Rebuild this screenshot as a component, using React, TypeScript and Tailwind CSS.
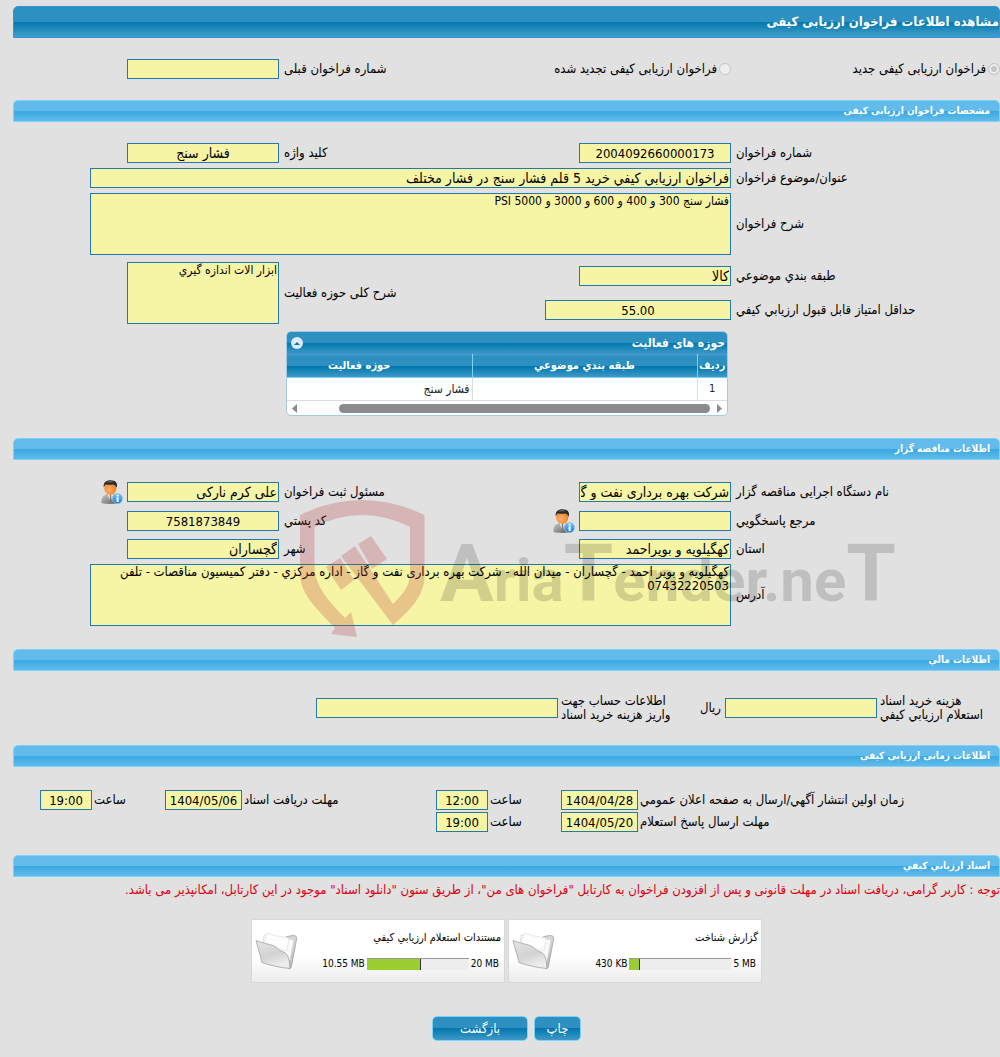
import type { ReactNode } from "react";

const fieldClass =
  "block h-5 shrink-0 border border-[#2578a9] bg-[#f6f4a5] px-px leading-[18px] text-black outline-none";
const areaClass =
  "block h-[62px] resize-none border border-[#2578a9] bg-[#f6f4a5] px-px leading-[14px] text-black outline-none";

const UserIcon = () => (
  <svg viewBox="0 0 22 24" className="h-6 w-[22px]" aria-hidden="true">
    <defs>
      <linearGradient id="suit" x1="0" y1="0" x2="1" y2="1">
        <stop offset="0" stopColor="#c9c9c9" />
        <stop offset="1" stopColor="#5d5d5d" />
      </linearGradient>
      <radialGradient id="face" cx="0.4" cy="0.6" r="0.7">
        <stop offset="0" stopColor="#ffb168" />
        <stop offset="1" stopColor="#e9791f" />
      </radialGradient>
      <linearGradient id="info" x1="0" y1="0" x2="0" y2="1">
        <stop offset="0" stopColor="#7fc4ef" />
        <stop offset="1" stopColor="#1b7fd4" />
      </linearGradient>
    </defs>
    <path d="M0.5 23 C0 17.500 2.500 15 6.500 14 L13 14 C16 15 18 18 17.500 23 C12 24.200 5 24.200 0.500 23Z" fill="url(#suit)" />
    <path d="M6.500 13.500 L9.500 22.500 L12.500 13.500Z" fill="#f7f7f7" />
    <path d="M8.800 15 L10.200 15 L10.600 21 L9.500 23 L8.600 21Z" fill="#777" />
    <ellipse cx="9.300" cy="8.500" rx="6" ry="6.400" fill="url(#face)" />
    <path d="M2.800 7.500 C2 2.500 5 0.300 9.500 0.300 C14.500 0.300 17 3 15.800 7.800 C14.500 6 14 5 12.500 4.600 C9 5.200 6 4.600 4.500 4.600 C3.800 5.500 3.300 6.500 2.800 7.500Z" fill="#2a2a2a" />
    <path d="M5 2.500 C7 0.900 11 0.900 13 2.400 C10.500 2 7.500 2.200 5 2.500Z" fill="#777" />
    <circle cx="16.500" cy="18.500" r="5.200" fill="url(#info)" stroke="#a4d3f3" strokeWidth="0.600" />
    <rect x="15.600" y="17.300" width="2" height="4.700" fill="#fff" />
    <rect x="15.600" y="14.800" width="2" height="1.700" fill="#fff" />
  </svg>
);

const FolderIcon = () => (
  <svg viewBox="0 0 44 40" className="h-10 w-11" aria-hidden="true">
    <defs>
      <linearGradient id="folderFront" x1="0" y1="0" x2="0.400" y2="1">
        <stop offset="0" stopColor="#e6e6e6" />
        <stop offset="0.600" stopColor="#d2d2d2" />
        <stop offset="1" stopColor="#ededed" />
      </linearGradient>
      <linearGradient id="folderBack" x1="0" y1="0" x2="0" y2="1">
        <stop offset="0" stopColor="#d8d8d8" />
        <stop offset="1" stopColor="#b5b5b5" />
      </linearGradient>
    </defs>
    <path d="M28 8 L32 5.500 L38 4.500 C41 4.500 42 5.500 41.600 8 L36.500 35 C36 37.500 35 38 33.500 37.500 L27 20Z" fill="url(#folderBack)" stroke="#a2a2a2" strokeWidth="0.800" />
    <path d="M9 4 L31 7 L39 9 L35 30 L8 14Z" fill="#f9f9f9" stroke="#d0d0d0" strokeWidth="0.600" />
    <path d="M12 2 L20 4.500 L34 7 L32 20 L9 13Z" fill="#fdfdfd" stroke="#dadada" strokeWidth="0.600" />
    <path d="M1 9.500 C8 12 13 13 18 14.500 C22 16 23 19 27 20.500 C32 22 34 24 35 37.500 C25 36.500 15 34.500 7 31.500 C5.500 25 3 17 1 9.500Z" fill="url(#folderFront)" stroke="#aaaaaa" strokeWidth="0.900" />
  </svg>
);

const Watermark = () => (
  <div dir="ltr" className="pointer-events-none absolute top-[499px] left-[300px] flex" aria-hidden="true">
    <svg viewBox="300 499 126 139" className="h-[139px] w-[126px]" fill="rgba(185,50,60,0.25)">
      <path d="M300 515 Q362 485 424.500 515 V577 C424 597 408 612 393 625 L341 556 L355 546 L393 604 C403 594 410 586 410 573 V527 Q362 503 314.500 527 V570 C316 587 330 603 345 618 L351 612 L357 637 L331 634 L335 628 C316 608 300 594 300 573Z" />
      <path d="M326 567 L340 558 L354 580 L341 590Z" />
      <path d="M358 544 L371 536 L387 559 L372 569Z" />
    </svg>
    <span className="mt-7 ml-[14px] font-[Roboto,sans-serif] text-[60px] leading-[94px] font-bold whitespace-nowrap text-black/15">
      <span className="text-[80px]">A</span>ria<span className="text-[80px]">T</span>ender.ne<span className="text-[80px]">T</span>
    </span>
  </div>
);

const SectionTitle = ({ children }: { children: ReactNode }) => (
  <h2 className="h-[22px] rounded-t-[5px] border border-[#78d3f8] bg-[linear-gradient(#62bbea_0,#62bbea_50%,#38a8e1_50%,#62bbea_100%)] px-[9px] text-[10px] leading-5 font-bold text-white">
    {children}
  </h2>
);

// First label of a row, its text sits against the field
const StartLabel = ({ id, children }: { id: string; children: ReactNode }) => (
  <label htmlFor={id} className="w-[269px] shrink-0 pl-[5px] text-left">
    {children}
  </label>
);

const MidLabel = ({ id, children }: { id: string; children: ReactNode }) => (
  <label htmlFor={id} className="flex-1 pl-[5px] text-left">
    {children}
  </label>
);

const documents = [
  { title: "گزارش شناخت", used: "430 KB", total: "5 MB", percent: 10 },
  { title: "مستندات استعلام ارزيابي کيفي", used: "10.55 MB", total: "20 MB", percent: 53 },
];

const App = () => {
  return (
    <main
      dir="rtl"
      lang="fa"
      className="relative min-h-screen overflow-x-clip bg-[#e1e1e1] pt-[6px] pb-4 pl-[13px] font-['DejaVu_Sans_Condensed','DejaVu_Sans',sans-serif] text-[13px] leading-[14px] text-black"
    >
      <h1 className="h-8 rounded-t-[5px] border border-[#2f94de] bg-[linear-gradient(#2e90c0_0,#2e90c0_50%,#0078ae_50%,#459fc9_100%)] leading-[30px] font-bold text-white">
        مشاهده اطلاعات فراخوان ارزیابی کیفی
      </h1>

      {/* Call type */}
      <div className="mt-[21px] flex items-center">
        <label className="flex w-[269px] items-center gap-[2px]">
          <input type="radio" name="kind" disabled defaultChecked className="size-3 appearance-none rounded-full border border-[#c6c6c6] bg-[#c4c4c4] shadow-[inset_0_0_0_2px_#eee]" />
          فراخوان ارزیابی کیفی جدید
        </label>
        <label className="flex items-center gap-[2px]">
          <input type="radio" name="kind" disabled className="size-3 appearance-none rounded-full border border-[#c6c6c6] bg-[#eee]" />
          فراخوان ارزیابی کیفی تجدید شده
        </label>
        <MidLabel id="prev">شماره فراخوان قبلی</MidLabel>
        <input id="prev" readOnly className={`${fieldClass} ml-[114px] w-[152px]`} />
      </div>

      {/* Call details */}
      <section className="mt-[21px]">
        <SectionTitle>مشخصات فراخوان ارزیابی کیفی</SectionTitle>
        <div className="mt-[21px] flex flex-col gap-[5px]">
          <div className="flex items-center">
            <StartLabel id="number">شماره فراخوان</StartLabel>
            <input id="number" readOnly value="2004092660000173" className={`${fieldClass} w-[152px] text-center`} />
            <MidLabel id="keyword">کلید واژه</MidLabel>
            <input id="keyword" readOnly value="فشار سنج" className={`${fieldClass} ml-[114px] w-[152px] text-center text-sm leading-[18px]`} />
          </div>
          <div className="flex items-center">
            <StartLabel id="subject">عنوان/موضوع فراخوان</StartLabel>
            <input id="subject" readOnly value="فراخوان ارزيابي کيفي خريد 5 قلم فشار سنج در فشار مختلف" className={`${fieldClass} ml-[77px] flex-1 text-[14px]`} />
          </div>
          <div className="flex items-center">
            <StartLabel id="description">شرح فراخوان</StartLabel>
            <textarea id="description" readOnly value="فشار سنج 300 و 400 و 600 و 3000 و 5000 PSI" className={`${areaClass} ml-[77px] flex-1 text-[12px]`} />
          </div>
        </div>

        <div className="mt-[7px] flex items-center">
          <div className="flex flex-col gap-[14px]">
            <div className="flex items-center">
              <StartLabel id="category">طبقه بندي موضوعي</StartLabel>
              <input id="category" readOnly value="کالا" className={`${fieldClass} w-[152px] text-[14px]`} />
            </div>
            <div className="flex items-center">
              <StartLabel id="score">حداقل امتياز قابل قبول ارزيابي کيفي</StartLabel>
              <input id="score" readOnly value="55.00" className={`${fieldClass} w-[186px] text-center`} />
            </div>
          </div>
          <MidLabel id="scope">شرح کلی حوزه فعالیت</MidLabel>
          <textarea id="scope" readOnly value="ابزار الات اندازه گيري" className={`${areaClass} ml-[114px] w-[152px] text-[12px]`} />
        </div>

        {/* Activity areas grid */}
        <div className="mt-[7px] mr-[272px] w-[442px] overflow-hidden rounded-[5px] border border-[#a6c9e2] bg-[#fcfdfd]">
          <div className="flex h-[22px] items-center justify-between bg-[linear-gradient(#2e90c0_0,#2e90c0_50%,#0078ae_50%,#3f98c6_100%)] pr-[2px] pl-1 text-[12px] font-bold text-white">
            حوزه های فعالیت
            <button type="button" aria-label="بستن" className="flex size-3 items-center justify-center rounded-full bg-[#dcebf9]">
              <svg viewBox="0 0 6 3" className="h-[3px] w-[6px]">
                <path d="M0 3 L3 0 L6 3Z" fill="#1c6fa5" />
              </svg>
            </button>
          </div>
          <table className="w-full table-fixed border-collapse text-[11px]">
            <thead>
              <tr className="h-[23px] border-t border-b border-t-[#4297d7] border-b-[#78d3f8] bg-[linear-gradient(#2e90c0_0,#2e90c0_50%,#0078ae_50%,#3f98c6_100%)] text-white">
                <th className="w-[30px] border-l border-[#78d3f8]">ردیف</th>
                <th className="w-[225px] border-l border-[#78d3f8]">طبقه بندي موضوعي</th>
                <th className="pr-10">حوزه فعاليت</th>
              </tr>
            </thead>
            <tbody>
              <tr className="h-[23px] border-b border-[#dddddd] bg-[#fdfefe] text-[#222]">
                <td className="border-l border-[#dddddd] text-center">1</td>
                <td className="border-l border-[#dddddd]"></td>
                <td className="px-[2px] text-[12px]">فشار سنج</td>
              </tr>
            </tbody>
          </table>
          <div className="flex h-[14px] items-center px-[5px]">
            <svg viewBox="0 0 5 9" className="h-[9px] w-[5px]">
              <path d="M0 0 L5 4.500 L0 9Z" fill="#8b8b8b" />
            </svg>
            <div className="mr-[7px] ml-[42px] h-[9px] flex-1 rounded-full bg-[#8b8b8b]" />
            <svg viewBox="0 0 5 9" className="h-[9px] w-[5px]">
              <path d="M5 0 L0 4.500 L5 9Z" fill="#8b8b8b" />
            </svg>
          </div>
        </div>
      </section>

      {/* Tender holder */}
      <section className="mt-[22px]">
        <SectionTitle>اطلاعات مناقصه گزار</SectionTitle>
        <div className="mt-[22px] flex flex-col gap-[5px]">
          <div className="mb-1 flex items-center">
            <StartLabel id="agency">نام دستگاه اجرایی مناقصه گزار</StartLabel>
            <input id="agency" readOnly value="شرکت بهره برداری نفت و گاز گچساران" className={`${fieldClass} w-[152px] text-[14px]`} />
            <MidLabel id="registrar">مسئول ثبت فراخوان</MidLabel>
            <input id="registrar" readOnly value="علی کرم نارکی" className={`${fieldClass} w-[152px] text-[14px]`} />
            <button type="button" aria-label="مشخصات" className="-my-1 mr-1 ml-[88px]">
              <UserIcon />
            </button>
          </div>
          <div className="mb-[3px] flex items-center">
            <StartLabel id="contact">مرجع پاسخگويي</StartLabel>
            <input id="contact" readOnly className={`${fieldClass} w-[152px]`} />
            <button type="button" aria-label="مشخصات" className="-my-1 mr-1">
              <UserIcon />
            </button>
            <MidLabel id="postal">کد پستي</MidLabel>
            <input id="postal" readOnly value="7581873849" className={`${fieldClass} ml-[114px] w-[152px] text-center`} />
          </div>
          <div className="flex items-center">
            <StartLabel id="province">استان</StartLabel>
            <input id="province" readOnly value="کهگیلویه و بویراحمد" className={`${fieldClass} w-[152px] text-[14px]`} />
            <MidLabel id="city">شهر</MidLabel>
            <input id="city" readOnly value="گچساران" className={`${fieldClass} ml-[114px] w-[152px] text-[14px]`} />
          </div>
          <div className="flex items-center">
            <StartLabel id="address">آدرس</StartLabel>
            <textarea
              id="address"
              readOnly
              value="کهگيلويه و بوير احمد - گچساران - ميدان الله - شرکت بهره برداری نفت و گاز - اداره مرکزي - دفتر کميسيون مناقصات - تلفن 07432220503"
              className={`${areaClass} ml-[77px] flex-1`}
            />
          </div>
        </div>
      </section>

      {/* Financial information */}
      <section className="mt-[23px]">
        <SectionTitle>اطلاعات مالي</SectionTitle>
        <div className="mt-[23px] flex items-center">
          <label htmlFor="cost" className="w-[123px] pl-[3px] text-left">
            هزينه خريد اسناد
            <br />
            استعلام ارزيابي کيفي
          </label>
          <input id="cost" readOnly className={`${fieldClass} w-[152px]`} />
          <span className="mr-1">ريال</span>
          <label htmlFor="account" className="flex-1 pl-[3px] text-left">
            اطلاعات حساب جهت
            <br />
            واريز هزينه خريد اسناد
          </label>
          <input id="account" readOnly className={`${fieldClass} ml-[303px] w-[242px]`} />
        </div>
      </section>

      {/* Schedule */}
      <section className="mt-[23px]">
        <SectionTitle>اطلاعات زمانی ارزیابی کیفی</SectionTitle>
        <div className="mt-[23px] flex flex-col gap-[2px]">
          <div className="flex items-center">
            <label htmlFor="publish" className="w-[362px] pl-[2px] text-left">زمان اولين انتشار آگهي/ارسال به صفحه اعلان عمومي</label>
            <input id="publish" readOnly value="1404/04/28" className={`${fieldClass} w-[77px] text-center`} />
            <label htmlFor="publishTime" className="w-[73px] pl-[2px] text-left">ساعت</label>
            <input id="publishTime" readOnly value="12:00" className={`${fieldClass} w-[52px] text-center`} />
            <label htmlFor="receive" className="flex-1 pl-[2px] text-left">مهلت دريافت اسناد</label>
            <input id="receive" readOnly value="1404/05/06" className={`${fieldClass} w-[77px] text-center`} />
            <label htmlFor="receiveTime" className="w-[73px] pl-[2px] text-left">ساعت</label>
            <input id="receiveTime" readOnly value="19:00" className={`${fieldClass} ml-[27px] w-[52px] text-center`} />
          </div>
          <div className="flex items-center">
            <label htmlFor="reply" className="w-[362px] pl-[2px] text-left">مهلت ارسال پاسخ استعلام</label>
            <input id="reply" readOnly value="1404/05/20" className={`${fieldClass} w-[77px] text-center`} />
            <label htmlFor="replyTime" className="w-[73px] pl-[2px] text-left">ساعت</label>
            <input id="replyTime" readOnly value="19:00" className={`${fieldClass} w-[52px] text-center`} />
          </div>
        </div>
      </section>

      {/* Documents */}
      <section className="mt-[23px]">
        <SectionTitle>اسناد ارزيابي کيفي</SectionTitle>
        <p className="mt-[6px] whitespace-nowrap text-[#dc0010]">
          توجه : کاربر گرامی، دریافت اسناد در مهلت قانونی و پس از افزودن فراخوان به کارتابل "فراخوان های من"، از طریق ستون "دانلود اسناد" موجود در این کارتابل، امکانپذیر می باشد.
        </p>
        <div className="mt-[22px] flex justify-center gap-[3px]">
          {documents.map((doc) => (
            <a
              key={doc.title}
              href="#"
              className="flex h-16 w-[254px] items-center justify-between border border-[#d8d8d8] bg-linear-to-b from-white from-60% to-[#ececec] px-[3px] text-[10px]"
            >
              <div>
                <div className="text-[11px]">{doc.title}</div>
                <div dir="ltr" className="mt-3 mr-[2px] flex items-center justify-end gap-[2px]">
                  <span>{doc.used}</span>
                  <div className="h-3 w-[102px] border-t border-[#999] bg-[#ededed]">
                    <div className="h-full border-r border-[#333] bg-[#9acd32]" style={{ width: `${doc.percent}%` }} />
                  </div>
                  <span>{doc.total}</span>
                </div>
              </div>
              <FolderIcon />
            </a>
          ))}
        </div>
      </section>

      <div className="mt-[33px] flex justify-center gap-[6px] text-white">
        <button type="button" className="h-[25px] w-[47px] rounded-[5px] border border-[#78d3f8] bg-[linear-gradient(#2e90c0_0,#2e90c0_50%,#0078ae_50%,#3f98c6_100%)]">
          چاپ
        </button>
        <button type="button" className="h-[25px] w-24 rounded-[5px] border border-[#78d3f8] bg-[linear-gradient(#2e90c0_0,#2e90c0_50%,#0078ae_50%,#3f98c6_100%)]">
          بازگشت
        </button>
      </div>

      <Watermark />
    </main>
  );
};

export default App;
